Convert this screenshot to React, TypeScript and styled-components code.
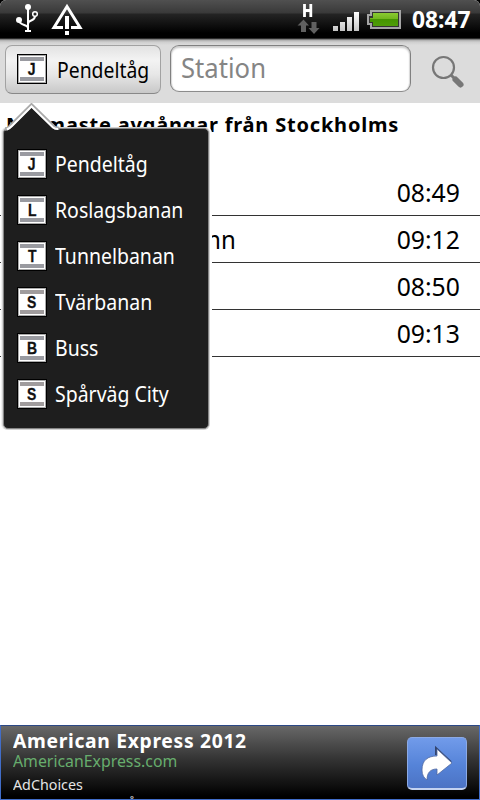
import React from 'react';
import styled, { createGlobalStyle } from 'styled-components';

const Global = createGlobalStyle`
  * { box-sizing: border-box; }
  html, body { margin: 0; padding: 0; background: #fff; }
  body { font-family: "Noto Sans", "Open Sans", sans-serif; color: #000; }
`;

const Screen = styled.div`
  width: 480px;
  height: 800px;
  display: flex;
  flex-direction: column;
  overflow: hidden;
  background: #fff;
`;

const Label = styled.span<{ $size: number; $sx?: number; $bold?: boolean; $color?: string; $gap?: number; $end?: boolean }>`
  display: block;
  white-space: pre;
  font-size: ${p => p.$size}px;
  line-height: 1;
  font-weight: ${p => (p.$bold ? 700 : 400)};
  color: ${p => p.$color || '#000'};
  letter-spacing: ${p => p.$gap || 0}px;
  transform: scaleX(${p => p.$sx || 1});
  transform-origin: ${p => (p.$end ? 'right' : 'left')} center;
`;

const StatusBar = styled.header`
  height: 38px;
  flex: none;
  display: flex;
  align-items: center;
  justify-content: space-between;
  background: linear-gradient(#505050 0, #393939 13px, #242424 14px, #000 33px, #000 38px);
  border-radius: 6px 6px 0 0;
  box-shadow: 0 0 0 8px #000;
  clip-path: inset(0);
`;

const ClockSlot = styled.div`
  width: 68px;
  height: 38px;
  padding-top: 7px;
`;

const StatusRight = styled.div`
  display: flex;
`;

const Toolbar = styled.div`
  height: 65px;
  flex: none;
  display: flex;
  align-items: flex-start;
  padding: 7px 0 0 5px;
  background: linear-gradient(#000 0, #555 1px, #aaa 2px, #cecece 4px, #dcdcdc 7px);
`;

const LineButton = styled.button`
  width: 156px;
  height: 49px;
  display: flex;
  align-items: center;
  gap: 10px;
  padding: 0 0 1px 11px;
  border: 1px solid #a2a2a2;
  border-bottom-color: #888;
  border-radius: 7px;
  background: linear-gradient(#e2e2e2, #f3f3f3 30%, #e7e7e7 60%, #c8c8c8);
  font-family: inherit;
`;

const Field = styled.div`
  width: 241px;
  height: 47px;
  margin-left: 9px;
  padding: 8px 0 0 10px;
  border: 1px solid #808080;
  border-bottom-color: #8c8c8c;
  border-radius: 9px;
  background: #fff;
  box-shadow: inset 0 2px 2px #ccc, inset 1px 0 1px #ddd, inset -1px 0 1px #ddd;
`;

const SearchSlot = styled.div`
  margin: 9px 0 0 18px;
  height: 40px;
`;

const Content = styled.main`
  flex: 1;
  position: relative;
`;

const Title = styled.h1`
  height: 66px;
  margin: 0;
  padding: 12px 0 0 6px;
`;

const Departure = styled.div`
  height: 47px;
  display: flex;
  justify-content: space-between;
  align-items: center;
  padding: 1px 20px 0 50px;
  border-bottom: 1px solid #333;
`;

const Menu = styled.nav`
  position: absolute;
  left: 3px;
  top: 25px;
  width: 206px;
  height: 301px;
  padding: 12px 0 0 13px;
  border: 1px solid #858585;
  border-radius: 5px;
  background: #1e1e1e;
  box-shadow: 0 0 0 1px #d2d2d2, 2px 0 0 1px #fff, -1px 0 0 1px #f0f0f0;
`;

const Pointer = styled.svg`
  position: absolute;
  left: 0;
  top: -26px;
`;

const MenuItem = styled.div`
  height: 46px;
  display: flex;
  align-items: center;
  gap: 8px;
`;

const MenuLabel = styled.div`
  padding-bottom: 2px;
`;

const Sign = styled.span`
  width: 30px;
  height: 30px;
  flex: none;
  display: flex;
  align-items: center;
  justify-content: center;
  border: 1px solid #000;
  background: #fff;
  box-shadow: inset 0 0 0 1px #aaa;
`;

const SignFace = styled.span<{ $rough?: boolean }>`
  width: 24px;
  height: 24px;
  display: flex;
  align-items: center;
  justify-content: center;
  border: solid ${p => (p.$rough ? '#a09c9d' : '#999aa0')};
  border-width: 4px 0;
`;

const SignLetter = styled.span`
  padding-top: 1px;
  font: 700 17px/16px "Liberation Sans", sans-serif;
  transform: scaleX(0.82);
  -webkit-text-stroke: 0.3px #111;
  color: #111;
`;

const Ad = styled.aside`
  height: 75px;
  flex: none;
  display: flex;
  justify-content: space-between;
  padding: 0 12px 0 12px;
  overflow: hidden;
  border: 1px solid #416dc8;
  border-top-color: #2b4886;
  background: linear-gradient(#686868, #343434 45%, #000 96%);
`;

const AdText = styled.div`
  display: flex;
  flex-direction: column;
`;

const AdLine = styled.div<{ $h: number; $top?: number; $indent?: number }>`
  height: ${p => p.$h}px;
  flex: none;
  padding: ${p => p.$top || 0}px 0 0 ${p => p.$indent || 0}px;
`;

const AdButton = styled.div`
  width: 60px;
  height: 53px;
  margin-top: 11px;
  border: 1px solid #8caae5;
  border-bottom: 2px solid #c3d2f0;
  border-radius: 5px;
  background: linear-gradient(#719bea, #5583d8 55%, #4c73c4);
`;

const LineSign = ({ letter }: { letter: string }) => (
  <Sign>
    <SignFace $rough={letter === 'S'}><SignLetter>{letter}</SignLetter></SignFace>
  </Sign>
);

const NoticeIcons = () => (
  <svg width="90" height="38" fill="none" stroke="#fff">
    <path d="M28 9V31M28 28C28 24 19 26 19 20M28 24C28 19 35 22 35 16" strokeWidth="2" />
    <circle cx="28" cy="7" r="3" fill="#fff" stroke="none" />
    <circle cx="19" cy="20" r="3" fill="#fff" stroke="none" />
    <circle cx="35" cy="14" r="2.3" strokeWidth="1.5" />
    <path d="M25 31H31" strokeWidth="2" />
    <path d="M63 27.5H54L67 6.500L80 27.500H71" strokeWidth="3" />
    <path d="M67 16V29M67 31V35" strokeWidth="4" />
  </svg>
);

const SignalIcons = () => (
  <svg width="116" height="38" viewBox="-2 0 116 38">
    <defs>
      <linearGradient id="bars" x2="0" y2="1"><stop stopColor="#fff" /><stop offset="1" stopColor="#c4c4c4" /></linearGradient>
      <linearGradient id="cell" x2="0" y2="1"><stop stopColor="#8acb31" /><stop offset=".45" stopColor="#72b51f" /><stop offset=".5" stopColor="#459500" /><stop offset="1" stopColor="#4f9d08" /></linearGradient>
    </defs>
    <path d="M6.500 4V17M12.800 4V17M6.500 10.500H12.800" stroke="#fff" strokeWidth="2.800" />
    <path d="M-0.500 25.500L5.500 19.500L11 25.500H8V32H3V25.500Z" fill="#606060" />
    <path d="M10.500 28H13.500V22H18.500V28H21.500L16 34Z" fill="#606060" />
    <path d="M35 26h5v5h-5zM42 22h5v9h-5zM49 17h5v14h-5zM56 12h5v19h-5z" fill="url(#bars)" />
    <path d="M73 11H102V28H73V24H70V15H73Z" fill="#333" stroke="#a5a5a5" strokeWidth="2" />
    <path d="M75 13H100V26H75V22H72V18H75Z" fill="url(#cell)" />
  </svg>
);

const SearchIcon = () => (
  <svg width="36" height="36" viewBox="0 0 36 36" fill="none" stroke="#777">
    <circle cx="14.500" cy="13.500" r="10.500" strokeWidth="2.200" />
    <path d="M22 21L26 25" strokeWidth="3" />
    <path d="M26.500 25.500L31.500 30.500" strokeWidth="6" strokeLinecap="round" />
  </svg>
);

const departures = [
  { to: '', time: '08:49' },
  { to: 'Södertälje hamn', time: '09:12' },
  { to: '', time: '08:50' },
  { to: '', time: '09:13' },
];

const lines = [
  { letter: 'J', name: 'Pendeltåg' },
  { letter: 'L', name: 'Roslagsbanan' },
  { letter: 'T', name: 'Tunnelbanan' },
  { letter: 'S', name: 'Tvärbanan' },
  { letter: 'B', name: 'Buss' },
  { letter: 'S', name: 'Spårväg City' },
];

export default function App() {
  return (
    <Screen>
      <Global />
      <StatusBar>
        <NoticeIcons />
        <StatusRight>
          <SignalIcons />
          <ClockSlot><Label $size={24} $bold $sx={0.95} $color="#fff">08:47</Label></ClockSlot>
        </StatusRight>
      </StatusBar>
      <Toolbar>
        <LineButton>
          <LineSign letter="J" />
          <Label $size={22} $sx={0.88}>Pendeltåg</Label>
        </LineButton>
        <Field><Label $size={27} $sx={0.95} $color="#858585">Station</Label></Field>
        <SearchSlot><SearchIcon /></SearchSlot>
      </Toolbar>
      <Content>
        <Title><Label $size={20} $bold $gap={0.8}>Närmaste avgångar från Stockholms</Label></Title>
        {departures.map(d => (
          <Departure key={d.time}>
            <Label $size={25} $sx={0.96}>{d.to}</Label>
            <Label $size={25} $sx={0.99} $end>{d.time}</Label>
          </Departure>
        ))}
        <Menu>
          <Pointer width="60" height="28">
            <path d="M2 28L27.500 2.500L53 28Z" fill="#1e1e1e" />
            <path d="M1 26Q4 26 6 23.500L27.500 2L50 24Q52 26 55 25" fill="none" stroke="#aaa" strokeWidth="3.500" />
            <path d="M3 26.500Q6 25 8 23L27.500 3.500L49 24.500Q51 26 54 26" fill="none" stroke="#fff" strokeWidth="2" />
          </Pointer>
          {lines.map(l => (
            <MenuItem key={l.name}>
              <LineSign letter={l.letter} />
              <MenuLabel><Label $size={22} $sx={0.885} $color="#fff">{l.name}</Label></MenuLabel>
            </MenuItem>
          ))}
        </Menu>
      </Content>
      <Ad>
        <AdText>
          <AdLine $h={27} $top={5}><Label $size={20} $bold $sx={0.965} $gap={0.7} $color="#fff">American Express 2012</Label></AdLine>
          <AdLine $h={20}><Label $size={16} $sx={0.99} $color="#67ad6d">AmericanExpress.com</Label></AdLine>
          <AdLine $h={22} $top={5}><Label $size={14} $sx={1.02} $color="#e4e4e4">AdChoices</Label></AdLine>
          <AdLine $h={18} $top={1} $indent={115}><Label $size={14} $color="#e4e4e4">å</Label></AdLine>
        </AdText>
        <AdButton>
          <svg width="58" height="50">
            <path d="M28 17V10L43 24" fill="none" stroke="#33456f" strokeWidth="2" />
            <path d="M14 32C14 22 20 18 29 18V11L44 25L29 37V31C22 31 19 35 19 42C16 40 14 37 14 32Z" fill="#fff" stroke="#50689f" strokeWidth="0.800" />
          </svg>
        </AdButton>
      </Ad>
    </Screen>
  );
}
